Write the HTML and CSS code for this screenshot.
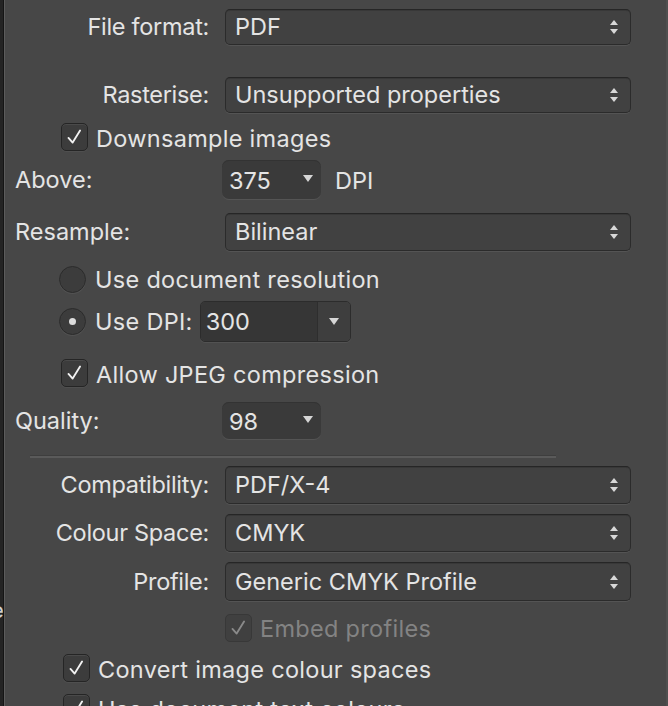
FILE: index.html
```html
<!DOCTYPE html>
<html>
<head>
<meta charset="utf-8">
<link rel="stylesheet" href="styles.css">
</head>
<body>
<div class="window">
  <div class="strip"><span class="strip-text">e</span></div>
  <div class="panel">
    <div class="row r1">
      <div class="label right">File format:</div>
      <div class="select"><span>PDF</span><span class="stepper"><i class="up"></i><i class="down"></i></span></div>
    </div>
    <div class="row r2">
      <div class="label right">Rasterise:</div>
      <div class="select"><span>Unsupported properties</span><span class="stepper"><i class="up"></i><i class="down"></i></span></div>
    </div>
    <div class="row r3 check-row ind1">
      <span class="checkbox"><svg viewBox="0 0 27 28"><path d="M7 15 L11.5 20 L19.5 7"/></svg></span>
      <span class="ctext">Downsample images</span>
    </div>
    <div class="row r4">
      <div class="label left">Above:</div>
      <div class="mini"><span>375</span><i class="tri"></i></div>
      <span class="unit">DPI</span>
    </div>
    <div class="row r5">
      <div class="label left">Resample:</div>
      <div class="select"><span>Bilinear</span><span class="stepper"><i class="up"></i><i class="down"></i></span></div>
    </div>
    <div class="row r6 radio-row">
      <span class="radio"></span>
      <span class="ctext">Use document resolution</span>
    </div>
    <div class="row r7 radio-row">
      <span class="radio on"></span>
      <span class="ctext">Use DPI:</span>
      <div class="combo"><span class="field">300</span><span class="btn"><i class="tri"></i></span></div>
    </div>
    <div class="row r8 check-row ind1">
      <span class="checkbox"><svg viewBox="0 0 27 28"><path d="M7 15 L11.5 20 L19.5 7"/></svg></span>
      <span class="ctext">Allow JPEG compression</span>
    </div>
    <div class="row r9">
      <div class="label left">Quality:</div>
      <div class="mini"><span>98</span><i class="tri"></i></div>
    </div>
    <div class="sep"></div>
    <div class="row r10">
      <div class="label right">Compatibility:</div>
      <div class="select"><span>PDF/X-4</span><span class="stepper"><i class="up"></i><i class="down"></i></span></div>
    </div>
    <div class="row r11">
      <div class="label right">Colour Space:</div>
      <div class="select"><span>CMYK</span><span class="stepper"><i class="up"></i><i class="down"></i></span></div>
    </div>
    <div class="row r12">
      <div class="label right">Profile:</div>
      <div class="select"><span>Generic CMYK Profile</span><span class="stepper"><i class="up"></i><i class="down"></i></span></div>
    </div>
    <div class="row r13 check-row ind2 disabled">
      <span class="checkbox"><svg viewBox="0 0 27 28"><path d="M7 15 L11.5 20 L19.5 7"/></svg></span>
      <span class="ctext">Embed profiles</span>
    </div>
    <div class="row r14 check-row ind3">
      <span class="checkbox"><svg viewBox="0 0 27 28"><path d="M7 15 L11.5 20 L19.5 7"/></svg></span>
      <span class="ctext">Convert image colour spaces</span>
    </div>
    <div class="row r15 check-row ind3">
      <span class="checkbox"><svg viewBox="0 0 27 28"><path d="M7 15 L11.5 20 L19.5 7"/></svg></span>
      <span class="ctext">Use document text colours</span>
    </div>
  </div>
</div>
</body>
</html>
```
FILE: styles.css
```css
html, body {
  margin: 0;
  padding: 0;
  height: 100%;
  overflow: hidden;
  background: #474747;
}
body {
  font-family: Inter, "Noto Sans", "Liberation Sans", sans-serif;
  font-size: 23.5px;
  line-height: 24px;
  color: #e4e4e4;
}
.window {
  display: flex;
  height: 706px;
  overflow: hidden;
}
.strip {
  width: 3px;
  flex: none;
  background: #242424;
  border-right: 1px solid #151515;
  box-shadow: 1px 0 0 #5c5c5c;
  overflow: hidden;
  color: #cfcfcf;
  font-size: 22px;
}
.strip-text {
  display: block;
  margin-top: 598px;
  margin-left: -9px;
}
.panel {
  flex: 1;
  padding-left: 1px;
  padding-right: 35px;
  border-right: 2px solid #4f4f4f;
  display: flex;
  flex-direction: column;
}
.row {
  display: flex;
  align-items: center;
  flex: none;
  height: 36px;
}
.label {
  width: 204px;
  flex: none;
  margin-right: 16px;
}
.label.right { text-align: right; letter-spacing: -0.3px; }
.label.left { text-align: left; padding-left: 10px; box-sizing: border-box; }
.ctext { letter-spacing: 0.3px; }

.select {
  flex: 1;
  height: 100%;
  box-sizing: border-box;
  background: #414141;
  border: 1px solid #2b2b2b;
  border-top-color: #262626;
  border-radius: 5px;
  box-shadow: 0 1px 0 #545454, inset 0 1px 0 #383838;
  display: flex;
  align-items: center;
  justify-content: space-between;
  padding: 0 12px 0 9px;
}
.stepper {
  display: flex;
  flex-direction: column;
  gap: 4px;
  align-items: center;
}
.stepper i {
  display: block;
  width: 0;
  height: 0;
  border-left: 4px solid transparent;
  border-right: 4px solid transparent;
}
.stepper .up { border-bottom: 5px solid #d8d8d8; }
.stepper .down { border-top: 5px solid #d8d8d8; }

.tri {
  display: block;
  width: 0;
  height: 0;
  border-left: 5px solid transparent;
  border-right: 5px solid transparent;
  border-top: 7px solid #d6d6d6;
}

.mini {
  width: 99px;
  height: 100%;
  box-sizing: border-box;
  margin-left: -3px;
  background: #3a3a3a;
  border-radius: 7px;
  box-shadow: 0 1px 0 #545454, inset 0 1px 0 #333;
  display: flex;
  align-items: center;
  justify-content: space-between;
  padding: 3px 8px 0 7px;
}
.mini .tri { margin-top: -6px; }
.unit { margin-left: 14px; margin-top: 3px; }

.checkbox {
  width: 27px;
  height: 28px;
  box-sizing: border-box;
  flex: none;
  background: #3c3c3c;
  border: 1px solid #252525;
  border-radius: 5px;
  box-shadow: inset 0 1px 0 #4a4a4a, 0 1px 0 #4f4f4f;
}
.checkbox svg {
  display: block;
  width: 100%;
  height: 100%;
}
.checkbox path {
  fill: none;
  stroke: #f2f2f2;
  stroke-width: 2;
  stroke-linecap: round;
  stroke-linejoin: round;
}
.check-row { height: 28px; }
.check-row .ctext { margin-left: 8px; margin-top: 3px; }
.ind1 { padding-left: 56px; }
.ind2 { padding-left: 220px; }
.ind3 { padding-left: 58px; }
.disabled .ctext { color: #838383; }
.disabled .checkbox { background: #404040; border-color: #383838; box-shadow: none; }
.disabled .checkbox path { stroke: #8a8a8a; }

.radio-row { padding-left: 54px; }
.radio {
  width: 27px;
  height: 27px;
  box-sizing: border-box;
  flex: none;
  border-radius: 50%;
  background: #3c3c3c;
  border: 1px solid #2b2b2b;
  box-shadow: 0 1px 0 #525252;
  display: flex;
  align-items: center;
  justify-content: center;
}
.radio.on::after {
  content: "";
  width: 7px;
  height: 7px;
  border-radius: 50%;
  background: #dcdcdc;
}
.radio-row .ctext { margin-left: 9px; }

.combo {
  margin-left: 7px;
  width: 151px;
  height: 100%;
  box-sizing: border-box;
  display: flex;
  border: 1px solid #2c2c2c;
  border-radius: 5px;
  overflow: hidden;
  box-shadow: 0 1px 0 #525252;
}
.combo .field {
  flex: 1;
  background: #363636;
  padding-left: 5px;
  display: flex;
  align-items: center;
  border-right: 1px solid #2e2e2e;
}
.combo .btn {
  width: 32px;
  background: #3e3e3e;
  display: flex;
  align-items: center;
  justify-content: center;
}

.sep {
  height: 2px;
  margin: 16px 75px 0 25px;
  background: #5a5a5a;
  border-top: 1px solid #3e3e3e;
  flex: none;
}

.r1 { margin-top: 9px; }
.r2 { margin-top: 32px; }
.r3 { margin-top: 10px; }
.r4 { margin-top: 9px; height: 39px; }
.r5 { margin-top: 14px; height: 38px; }
.r6 { margin-top: 15px; height: 27px; }
.r7 { margin-top: 8px; height: 41px; }
.r8 { margin-top: 17px; }
.r9 { margin-top: 15px; height: 37px; }
.r10 { margin-top: 8px; height: 38px; }
.r11 { margin-top: 10px; height: 38px; }
.r12 { margin-top: 10px; height: 39px; }
.r13 { margin-top: 12px; height: 29px; }
.r14 { margin-top: 12px; }
.r15 { margin-top: 12px; }
```
